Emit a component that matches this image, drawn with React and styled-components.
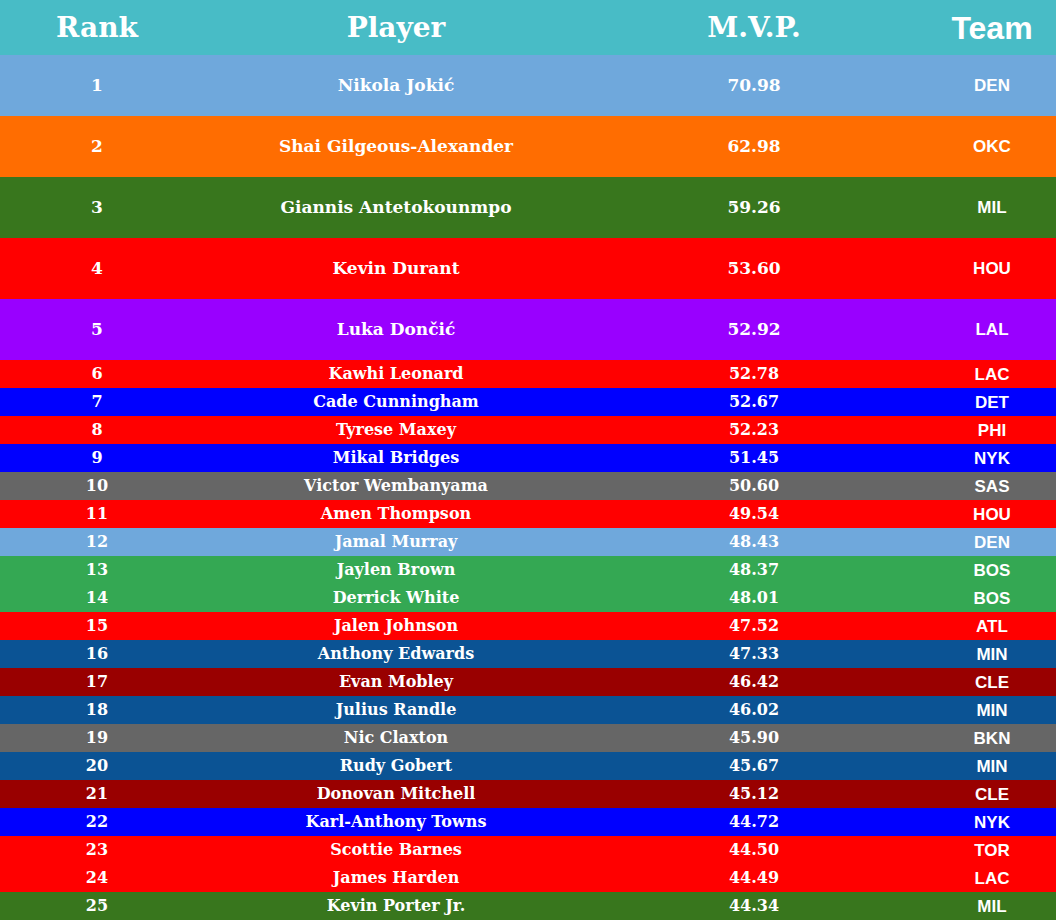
import styled, { createGlobalStyle } from "styled-components";

const Global = createGlobalStyle`
  html, body {
    margin: 0;
    padding: 0;
    background: #ffffff;
    overflow: hidden;
  }
`;

const players = [
  [1, "Nikola Jokić", "70.98", "DEN", "#6fa8dc"],
  [2, "Shai Gilgeous-Alexander", "62.98", "OKC", "#ff6d01"],
  [3, "Giannis Antetokounmpo", "59.26", "MIL", "#38761d"],
  [4, "Kevin Durant", "53.60", "HOU", "#ff0000"],
  [5, "Luka Dončić", "52.92", "LAL", "#9900ff"],
  [6, "Kawhi Leonard", "52.78", "LAC", "#ff0000"],
  [7, "Cade Cunningham", "52.67", "DET", "#0000ff"],
  [8, "Tyrese Maxey", "52.23", "PHI", "#ff0000"],
  [9, "Mikal Bridges", "51.45", "NYK", "#0000ff"],
  [10, "Victor Wembanyama", "50.60", "SAS", "#666666"],
  [11, "Amen Thompson", "49.54", "HOU", "#ff0000"],
  [12, "Jamal Murray", "48.43", "DEN", "#6fa8dc"],
  [13, "Jaylen Brown", "48.37", "BOS", "#34a853"],
  [14, "Derrick White", "48.01", "BOS", "#34a853"],
  [15, "Jalen Johnson", "47.52", "ATL", "#ff0000"],
  [16, "Anthony Edwards", "47.33", "MIN", "#0b5394"],
  [17, "Evan Mobley", "46.42", "CLE", "#990000"],
  [18, "Julius Randle", "46.02", "MIN", "#0b5394"],
  [19, "Nic Claxton", "45.90", "BKN", "#666666"],
  [20, "Rudy Gobert", "45.67", "MIN", "#0b5394"],
  [21, "Donovan Mitchell", "45.12", "CLE", "#990000"],
  [22, "Karl-Anthony Towns", "44.72", "NYK", "#0000ff"],
  [23, "Scottie Barnes", "44.50", "TOR", "#ff0000"],
  [24, "James Harden", "44.49", "LAC", "#ff0000"],
  [25, "Kevin Porter Jr.", "44.34", "MIL", "#38761d"],
];

const Board = styled.div`
  width: 1074px;
  display: flex;
  flex-direction: column;
  color: #ffffff;
`;

const Row = styled.div`
  display: grid;
  grid-template-columns: 194px 404px 312px 164px;
  align-items: center;
  height: ${(p) => p.$height}px;
  background: ${(p) => p.$bg};
`;

const HeadCell = styled.div`
  text-align: center;
  font-family: ${(p) =>
    p.$sans ? '"Liberation Sans", Arial, sans-serif' : '"DejaVu Serif", serif'};
  font-weight: bold;
  font-size: ${(p) => (p.$sans ? "32px" : "28px")};
  line-height: 1;
`;

const Cell = styled.div`
  text-align: center;
  font-family: "DejaVu Serif", serif;
  font-weight: bold;
  font-size: ${(p) => (p.$big ? "17px" : "16px")};
  line-height: 1;
`;

const TeamCell = styled.div`
  text-align: center;
  font-family: "Liberation Sans", Arial, sans-serif;
  font-weight: bold;
  font-size: 17px;
  line-height: 1;
`;

export default function App() {
  return (
    <Board>
      <Global />
      <Row $height={55} $bg="#48bcc6">
        <HeadCell>Rank</HeadCell>
        <HeadCell>Player</HeadCell>
        <HeadCell>M.V.P.</HeadCell>
        <HeadCell $sans>Team</HeadCell>
      </Row>
      {players.map(([rank, name, mvp, team, bg]) => {
        const big = rank <= 5;
        return (
          <Row key={rank} $height={big ? 61 : 28} $bg={bg}>
            <Cell $big={big}>{rank}</Cell>
            <Cell $big={big}>{name}</Cell>
            <Cell $big={big}>{mvp}</Cell>
            <TeamCell>{team}</TeamCell>
          </Row>
        );
      })}
    </Board>
  );
}
